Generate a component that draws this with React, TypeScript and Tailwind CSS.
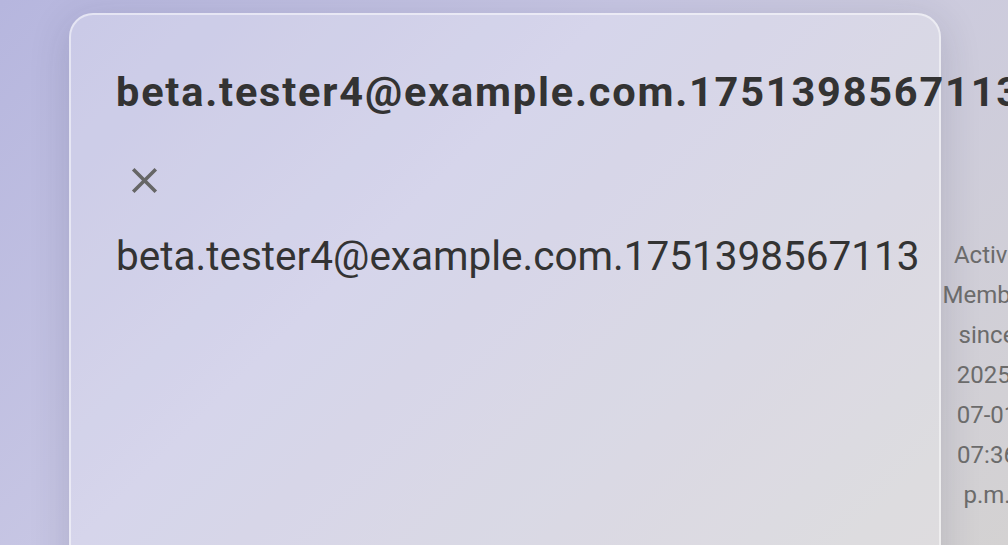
const CloseIcon = () => (
  <svg viewBox="0 0 24 24" className="w-[43px] h-[43px] fill-[#666666]">
    <path d="M19 6.41 17.59 5 12 10.59 6.41 5 5 6.41 10.59 12 5 17.59 6.41 19 12 13.41 17.59 19 19 17.59 13.41 12z" />
  </svg>
);

const App = () => {
  const email = "beta.tester4@example.com.1751398567113";
  return (
    <div
      className="w-full h-[545px] overflow-hidden flex items-start bg-[linear-gradient(135deg,#b6b6de_0%,#c8c7e4_40%,#d4d2d2_100%)]"
      style={{ fontFamily: "Roboto, 'Noto Sans', sans-serif" }}
    >
      <div className="shrink-0 ml-[69px] mt-[13px] w-[872px] h-[620px] rounded-[24px] border-2 border-white/50 bg-white/25 shadow-[0_8px_40px_rgba(30,30,60,0.16)] pl-[45px] pt-[53px]">
        <h1 className="text-[41.5px] leading-[48px] font-bold tracking-[1.8px] text-[#333333] whitespace-nowrap">
          {email}
        </h1>
        <button className="mt-[43px] ml-[7px] flex h-[43px] w-[43px]">
          <CloseIcon />
        </button>
        <p className="mt-[30px] text-[40.5px] leading-[48px] text-[#333333] whitespace-nowrap">
          {email}
        </p>
      </div>
      <div className="shrink-0 w-[90px] ml-[1px] mt-[235px] text-center text-[24px] leading-[40px] text-[#6b6b6b]">
        Active Member since 2025-07-01 07:36 p.m.
      </div>
    </div>
  );
};

export default App;
